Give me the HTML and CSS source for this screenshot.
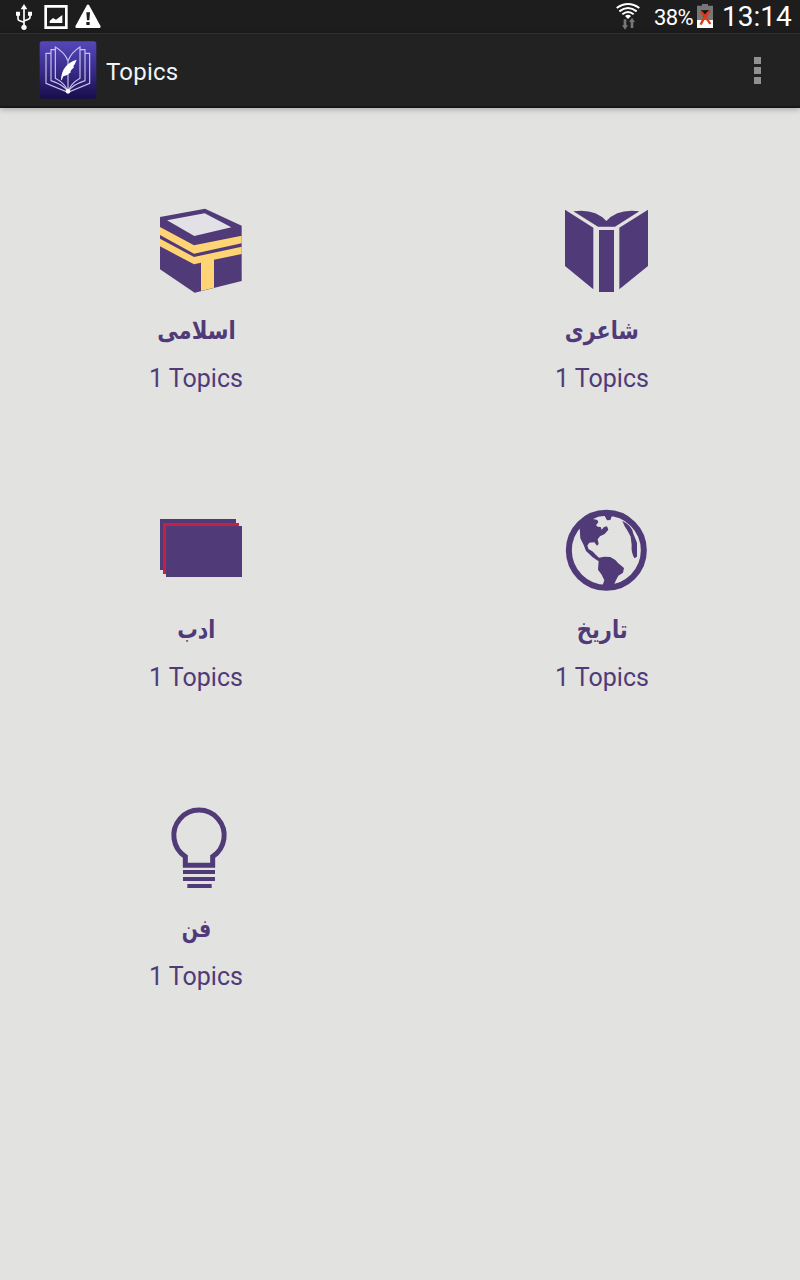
FILE: index.html
```html
<!DOCTYPE html>
<html lang="en">
<head>
<meta charset="utf-8">
<title>Topics</title>
<link rel="stylesheet" href="styles.css">
</head>
<body>
<header class="status">
  <svg class="status-left" viewBox="0 0 330 99" width="110" height="33">
    <g fill="none" stroke="#fff" stroke-width="5">
      <path d="M72 22V80M54 44v12q0 4 5 6l13 5M90 42v10q0 4-5 6l-13 5"/>
    </g>
    <path fill="#fff" d="M72 12l10 16H62zM48 35h12v12H48zM84 35h12v12H84z"/>
    <circle cx="72" cy="82" r="8" fill="#fff"/>
    <path fill="#fff" fill-rule="evenodd" d="M133 15h70v72h-70zM141 23v56h54V23z"/>
    <path fill="#fff" d="M149 69V63l10-9 9 5 19-14v24z"/>
    <path fill="#fff" stroke="#fff" stroke-width="8" stroke-linejoin="round" d="M264 18L298 80H230z"/>
    <path fill="#1d1d1d" d="M259 37h11l-2 24h-7zM259 66h10v9h-10z"/>
  </svg>
  <div class="status-right">
    <svg class="wifi" viewBox="45 0 78 99" width="26" height="33">
      <g fill="none" stroke="#fff" stroke-width="6">
        <path d="M50 24Q84 0 118 24M58 34Q84 14 110 34M67 43Q84 29 101 43"/>
      </g>
      <path fill="#fff" d="M75 48Q84 41 93 48L84 57z"/>
      <path fill="#777" d="M71 58h8v18h5L75 89 66 76h5zM92 84h8V66h5L96 53 87 66h5z"/>
    </svg>
    <span class="percent">38%</span>
    <svg class="battery" viewBox="288 0 54 99" width="18" height="33">
      <path fill="#777" d="M291 17h15v-5h18v5h15v44h-48z"/>
      <path fill="#fff" d="M291 60h48v24h-48z"/>
      <path fill="#161616" d="M302 31l27-1-9 21h-9z"/>
      <path fill="none" stroke="#e03a18" stroke-width="7" d="M303 35q14 14 28 37M330 32q-18 18-28 42"/>
    </svg>
    <span class="clock">13:14</span>
  </div>
</header>
<nav class="bar">
  <svg class="logo" viewBox="0 0 174 174" width="58" height="58">
    <defs><linearGradient id="lg" x1="0" y1="0" x2="0" y2="1">
      <stop offset="0" stop-color="#5647ba"/><stop offset=".5" stop-color="#392b8b"/><stop offset="1" stop-color="#180e4b"/>
    </linearGradient></defs>
    <rect x="2" y="1" width="170" height="172" rx="8" fill="url(#lg)"/>
    <g fill="none" stroke="#c9c1ec" stroke-width="3.500">
      <path d="M87 152V60Q77 34 49 18V112Q79 128 87 152Q95 128 123 112V18Q97 34 87 60"/>
      <path d="M49 26H36V119Q75 132 87 152Q99 132 138 119V26H123M36 37H21V127L87 154 152 127V37H138"/>
    </g>
    <circle cx="87" cy="151" r="7" fill="#fff"/>
    <path fill="#fff" d="M66 116Q68 70 113 56Q108 70 103 76L105 79Q97 86 94 91L96 93Q86 104 73 106L68 118z"/>
  </svg>
  <h1 class="title">Topics</h1>
  <svg class="more" viewBox="0 0 7 27" width="7" height="27"><path fill="#919191" d="M0 0h7v7H0zM0 10h7v7H0zM0 20h7v7H0z"/></svg>
</nav>
<main class="grid">
  <section class="cell">
    <svg class="icon" viewBox="0 0 360 300">
      <path fill="#503a78" d="M60 66L195 41 305 92V258L164 293 60 223z"/>
      <path fill="#e2e2e6" d="M81 76L194 55 274 97 163 123z"/>
      <path fill="#ffd475" d="M60 96L162 151 305 122V145L162 176 60 120zM60 131L162 186 305 155V177L222 194V278L183 288V203L162 208 60 154z"/>
    </svg>
    <h2 class="name w-islami" lang="ur" dir="rtl">اسلامی</h2>
    <p class="count">1 Topics</p>
  </section>
  <section class="cell">
    <svg class="icon" viewBox="0 0 360 300">
      <path fill="#503a78" d="M57 44L142 98V283L57 213zM306 44L220 98V283L306 213zM159 105H204V291H159zM82 49Q146 40 181 78Q216 40 280 49L207 95H156z"/>
    </svg>
    <h2 class="name w-shairi" lang="ur" dir="rtl">شاعری</h2>
    <p class="count">1 Topics</p>
  </section>
  <section class="cell">
    <svg class="icon" viewBox="0 -18 360 300">
      <path fill="#503a78" d="M60 57H288V69H69V210H60z"/>
      <path fill="#c51f42" d="M69 69H297V78H78V222H69z"/>
      <path fill="#503a78" d="M78 78H306V231H78z"/>
    </svg>
    <h2 class="name w-adab" lang="ur" dir="rtl">ادب</h2>
    <p class="count">1 Topics</p>
  </section>
  <section class="cell">
    <svg class="icon" viewBox="0 -18 360 300">
      <circle cx="181" cy="151" r="112.500" fill="none" stroke="#503a78" stroke-width="18"/>
      <path fill="#503a78" d="M101 83L130 50 158 43 150 53 141 57 154 60 157 67 150 76 155 80 164 81 167 89 174 81 183 79 187 89 176 102 162 109 155 118 158 132 153 137 145 127 130 128 124 137 128 148 139 154 150 165 159 173 175 170 193 171 208 180 216 189 234 204 231 218 217 227 209 242 204 255H170L175 241 167 224 156 209 158 184 151 179 140 172 120 153 113 135 103 115zM158 43L174 44 183 61 193 60 198 47 178 38zM229 63Q257 75 262 101L273 128V170L265 175Q255 157 257 135L254 110Q242 87 236 79z"/>
    </svg>
    <h2 class="name w-tareekh" lang="ur" dir="rtl">تاریخ</h2>
    <p class="count">1 Topics</p>
  </section>
  <section class="cell">
    <svg class="icon" viewBox="0 -6 360 300">
      <path fill="none" stroke="#503a78" stroke-width="15" d="M136 211V185A75.500 76 0 1 1 218 185V211z"/>
      <path fill="#503a78" d="M129 225H225V237H129zM129 246H225V258H129zM142 267H215V279H142z"/>
    </svg>
    <h2 class="name w-fan" lang="ur" dir="rtl">فن</h2>
    <p class="count">1 Topics</p>
  </section>
</main>
</body>
</html>
```
FILE: styles.css
```css
* { box-sizing: border-box; }
body {
  margin: 0;
  width: 800px;
  height: 1280px;
  overflow: hidden;
  background: #e2e2e0;
  font-family: Roboto, "Noto Sans", sans-serif;
}
.status {
  height: 33px;
  display: flex;
  justify-content: space-between;
  background: #1d1d1d;
  color: #fff;
}
.status-right { display: flex; padding-right: 8px; }
.percent {
  margin-left: 13px;
  width: 42px;
  font-size: 22px;
  line-height: 35px;
  letter-spacing: -0.6px;
}
.clock {
  margin-left: 8px;
  width: 70px;
  font-size: 28px;
  line-height: 33px;
  white-space: nowrap;
}
.bar {
  height: 75px;
  display: flex;
  align-items: center;
  padding: 0 39px;
  background: #222;
  border-top: 1px solid #303030;
  border-bottom: 2px solid #171717;
  box-shadow: 0 1px 6px rgba(0, 0, 0, 0.3);
}
.title {
  margin: 4px 0 0 9px;
  flex: 1;
  color: #f3f3f3;
  font-size: 24px;
  font-weight: 400;
  line-height: 32px;
  letter-spacing: 0.2px;
}
.grid {
  display: grid;
  grid-template-columns: 392px 392px;
  grid-auto-rows: 299px;
  column-gap: 14px;
  padding-top: 87px;
}
.cell {
  display: flex;
  flex-direction: column;
  align-items: center;
  color: #503a78;
}
.icon {
  display: block;
  width: 120px;
  height: 100px;
  flex: none;
  margin-left: 8px;
}
.name {
  margin: 16px 0 0;
  height: 40px;
  font-family: "DejaVu Sans", sans-serif;
  font-size: 25px;
  font-weight: 700;
  line-height: 40px;
}
/* condensed Urdu headings */
.w-islami { transform: scaleX(0.845); }
.w-shairi { transform: scaleX(0.825); }
.w-adab { transform: scaleX(0.82); }
.w-tareekh { transform: scaleX(0.84); }
.w-fan { transform: scaleX(0.76); }
.count {
  margin: 13px 0 0;
  font-size: 25px;
  line-height: 30px;
}
```
